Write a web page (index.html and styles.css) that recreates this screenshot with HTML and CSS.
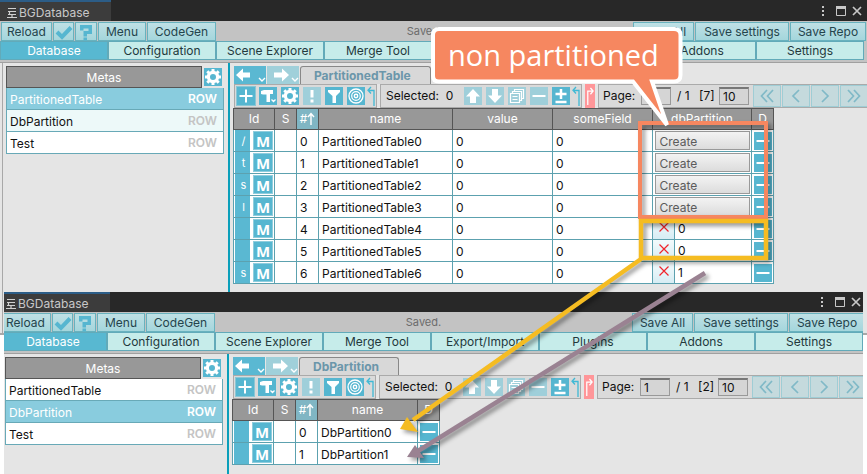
FILE: index.html
```html
<!DOCTYPE html>
<html lang="en">
<head>
<meta charset="utf-8">
<title>BGDatabase</title>
<link rel="stylesheet" href="styles.css">
</head>
<body>
<svg class="defs" aria-hidden="true">
  <symbol id="logo" viewBox="0 0 12 12"><path d="M2 1.500h8M2 4.500h8M2 7.500h8M3.500 4.500v3M1 10.500h10M6 7.500v3" fill="none" stroke="#d0d0d0" stroke-width="1.200"/></symbol>
  <symbol id="dots" viewBox="0 0 12 12"><path d="M5 1h2v2H5zM5 5h2v2H5zM5 9h2v2H5z" fill="#c8c8c8"/></symbol>
  <symbol id="max" viewBox="0 0 12 12"><path d="M1.500 1.500h9v9h-9z" fill="none" stroke="#c8c8c8"/><path d="M1 1h10v3H1z" fill="#c8c8c8"/></symbol>
  <symbol id="close" viewBox="0 0 12 12"><path d="M2 2l8 8M10 2l-8 8" stroke="#c8c8c8" stroke-width="1.700"/></symbol>
  <symbol id="check" viewBox="0 0 18 18"><path d="M2 9l5 5L16 4.500" fill="none" stroke="#56b6d0" stroke-width="4"/></symbol>
  <symbol id="help" viewBox="0 0 18 18"><path d="M3 2h12v9h-5v2.500H6.500V8h5V5.500H6.500V7.500H3zM6.500 14.500H10v3H6.500z" fill="#56b6d0"/></symbol>
  <symbol id="gear" viewBox="0 0 18 18"><circle cx="9" cy="9" r="4.600" fill="none" stroke="#fff" stroke-width="3.200"/><path d="M9 1v2.500M9 14.500V17M1 9h2.500M14.500 9H17M3.300 3.300l1.900 1.900M12.800 12.800l1.900 1.900M14.700 3.300l-1.900 1.900M5.200 12.800l-1.900 1.900" stroke="#fff" stroke-width="3"/></symbol>
  <symbol id="back" viewBox="0 0 32 18"><path d="M2 9l7-6.500v4h7v5H9v4z" fill="#fff"/><path d="M25 12l3 3 3-3" fill="none" stroke="#fff" stroke-width="1.400"/></symbol>
  <symbol id="fwd" viewBox="0 0 32 18"><path d="M22 9l-7-6.500v4H7v5h8v4z" fill="#fff"/><path d="M25 12l3 3 3-3" fill="none" stroke="#fff" stroke-width="1.400"/></symbol>
  <symbol id="plus" viewBox="0 0 18 18"><path d="M9 2.500v13M2.500 9h13" stroke="#fff" stroke-width="2"/></symbol>
  <symbol id="tool" viewBox="0 0 18 18"><path d="M2 4l3-1h9v4h-3v8H7.500V7.500H4L2 7z" fill="#fff"/><path d="M12.500 12.500l2 2 2-2" fill="none" stroke="#fff" stroke-width="1.300"/></symbol>
  <symbol id="bang" viewBox="0 0 18 18"><path d="M7.500 3h3v7.500h-3zM7.500 12.500h3v3h-3z" fill="#fff"/></symbol>
  <symbol id="filter" viewBox="0 0 18 18"><path d="M3 3h12v2l-4 4v7H7.500V9L3 5z" fill="#fff"/></symbol>
  <symbol id="target" viewBox="0 0 18 18"><g fill="none" stroke="#fff"><circle cx="9" cy="9" r="7" stroke-width="1.300"/><circle cx="9" cy="9" r="4.300" stroke-width="1.200"/><circle cx="9" cy="9" r="1.700" stroke-width="1.400"/></g></symbol>
  <symbol id="hook" viewBox="0 0 8 20"><path d="M7 20V4.500H2M4 1L1 4.300 4 7.500" fill="none" stroke="#3fb9d5" stroke-width="1.300"/></symbol>
  <symbol id="hookr" viewBox="0 0 9 20"><path d="M2 20V4.500h5.500M5 1l3 3.500L5 8" fill="none" stroke="#fff" stroke-width="1.400"/></symbol>
  <symbol id="up" viewBox="0 0 18 18"><path d="M9 2l7 7.500h-4V16H6V9.500H2z" fill="#fff"/></symbol>
  <symbol id="down" viewBox="0 0 18 18"><path d="M9 16l7-7.500h-4V2H6v6.500H2z" fill="#fff"/></symbol>
  <symbol id="copy" viewBox="0 0 18 18"><path d="M2.500 6.500h9v9h-9zM4.500 6V4.500h9v9H12M6.500 4V2.500h9v9H14M4.500 9.500h5M4.500 12.500h5" fill="none" stroke="#fff" stroke-width="1.200"/></symbol>
  <symbol id="minus" viewBox="0 0 18 18"><path d="M2.500 9h13" stroke="#fff" stroke-width="2"/></symbol>
  <symbol id="plusminus" viewBox="0 0 18 18"><path d="M9 2v10M3.500 7h11M3.500 15h11" stroke="#fff" stroke-width="2.500"/></symbol>
  <symbol id="first" viewBox="0 0 18 18"><path d="M9 3L3.500 9 9 15M15 3L9.500 9l5.500 6" fill="none" stroke="#80b9c7" stroke-width="1.700"/></symbol>
  <symbol id="prev" viewBox="0 0 18 18"><path d="M12 3L6 9l6 6" fill="none" stroke="#80b9c7" stroke-width="1.700"/></symbol>
  <symbol id="next" viewBox="0 0 18 18"><path d="M6 3l6 6-6 6" fill="none" stroke="#80b9c7" stroke-width="1.700"/></symbol>
  <symbol id="last" viewBox="0 0 18 18"><path d="M3 3l5.500 6L3 15M9 3l5.500 6L9 15" fill="none" stroke="#80b9c7" stroke-width="1.700"/></symbol>
  <symbol id="sort" viewBox="0 0 8 14"><path d="M4 13V2M1 5l3-3.500L7 5" fill="none" stroke="#fff" stroke-width="1.400"/></symbol>
  <symbol id="cross" viewBox="0 0 12 12"><path d="M1.500 1.500l9 9M10.500 1.500l-9 9" stroke="#f0242c" stroke-width="1.200"/></symbol>
</svg>

<div class="desktop">
<section class="window window-a">
  <div class="content">
  <header class="titlebar">
    <div class="title-tab"><svg class="i12"><use href="#logo"/></svg>BGDatabase</div>
    <div class="window-controls"><svg class="i12"><use href="#dots"/></svg><svg class="i12"><use href="#max"/></svg><svg class="i12"><use href="#close"/></svg></div>
  </header>
  <div class="commands">
    <button class="cmd reload">Reload</button><button class="cmd check" aria-label="Check"><svg class="i18"><use href="#check"/></svg></button><button class="cmd help" aria-label="Help"><svg class="i18"><use href="#help"/></svg></button><button class="cmd menu">Menu</button><button class="cmd codegen">CodeGen</button>
    <span class="status">Saved.</span>
    <button class="cmd save-all">Save All</button><button class="cmd save-settings">Save settings</button><button class="cmd save-repo">Save Repo</button>
  </div>
  <nav class="tabs"><button class="active">Database</button><button>Configuration</button><button>Scene Explorer</button><button>Merge Tool</button><button>Export/Import</button><button>Plugins</button><button>Addons</button><button>Settings</button></nav>
  <div class="body">
    <aside class="metas">
      <div class="metas-head"><h2>Metas</h2><button class="tool" aria-label="Metas settings"><svg class="i18"><use href="#gear"/></svg></button></div>
      <ul>
        <li><button class="meta selected">PartitionedTable<b>ROW</b></button></li>
        <li><button class="meta tinted">DbPartition<b>ROW</b></button></li>
        <li><button class="meta">Test<b>ROW</b></button></li>
      </ul>
    </aside>
    <main>
      <div class="crumbs"><button class="nav-btn" aria-label="Back"><svg class="i32"><use href="#back"/></svg></button><button class="nav-btn" aria-label="Forward" disabled><svg class="i32"><use href="#fwd"/></svg></button><span class="crumb">PartitionedTable</span></div>
      <div class="toolbar">
        <div class="group">
          <button class="tool outlined" aria-label="Add"><svg class="i18"><use href="#plus"/></svg></button><button class="tool" aria-label="Tools"><svg class="i18"><use href="#tool"/></svg></button><button class="tool" aria-label="Options"><svg class="i18"><use href="#gear"/></svg></button><button class="tool" aria-label="Errors" disabled><svg class="i18"><use href="#bang"/></svg></button><button class="tool" aria-label="Filter"><svg class="i18"><use href="#filter"/></svg></button><button class="tool" aria-label="Target"><svg class="i18"><use href="#target"/></svg></button><svg class="hook"><use href="#hook"/></svg>
        </div>
        <div class="group">
          <span class="selected-count">Selected:&nbsp; 0</span><button class="tool" aria-label="Move up" disabled><svg class="i18"><use href="#up"/></svg></button><button class="tool" aria-label="Move down" disabled><svg class="i18"><use href="#down"/></svg></button><button class="tool" aria-label="Copy" disabled><svg class="i18"><use href="#copy"/></svg></button><button class="tool" aria-label="Remove" disabled><svg class="i18"><use href="#minus"/></svg></button><button class="tool" aria-label="Toggle selection"><svg class="i18"><use href="#plusminus"/></svg></button><svg class="hook"><use href="#hook"/></svg>
        </div>
        <button class="unfold" aria-label="Unfold"><svg class="hook"><use href="#hookr"/></svg></button>
        <div class="group pager">
          <label for="page-a">Page:</label><input id="page-a" value="1"><span class="pages">/ 1</span><span class="total">[7]</span><input aria-label="Page size" value="10">
          <button class="page-btn" aria-label="First"><svg class="i18"><use href="#first"/></svg></button><button class="page-btn" aria-label="Previous"><svg class="i18"><use href="#prev"/></svg></button><button class="page-btn" aria-label="Next"><svg class="i18"><use href="#next"/></svg></button><button class="page-btn" aria-label="Last"><svg class="i18"><use href="#last"/></svg></button>
        </div>
      </div>
      <table>
        <colgroup><col class="c-id"><col class="c-s"><col class="c-s"><col class="c-name"><col class="c-field"><col class="c-field"><col class="c-part"><col class="c-s"></colgroup>
        <thead><tr><th>Id</th><th>S</th><th class="sorted"><span>#<svg class="sort"><use href="#sort"/></svg></span></th><th>name</th><th>value</th><th>someField</th><th>dbPartition</th><th>D</th></tr></thead>
        <tbody>
          <tr><td class="id"><div><span>/</span><button>M</button></div></td><td></td><td>0</td><td>PartitionedTable0</td><td>0</td><td>0</td><td class="create"><button>Create</button></td><td class="del"><button class="tool" aria-label="Delete"><svg class="i18"><use href="#minus"/></svg></button></td></tr>
          <tr><td class="id"><div><span>t</span><button>M</button></div></td><td></td><td>1</td><td>PartitionedTable1</td><td>0</td><td>0</td><td class="create"><button>Create</button></td><td class="del"><button class="tool" aria-label="Delete"><svg class="i18"><use href="#minus"/></svg></button></td></tr>
          <tr><td class="id"><div><span>s</span><button>M</button></div></td><td></td><td>2</td><td>PartitionedTable2</td><td>0</td><td>0</td><td class="create"><button>Create</button></td><td class="del"><button class="tool" aria-label="Delete"><svg class="i18"><use href="#minus"/></svg></button></td></tr>
          <tr><td class="id"><div><span>l</span><button>M</button></div></td><td></td><td>3</td><td>PartitionedTable3</td><td>0</td><td>0</td><td class="create"><button>Create</button></td><td class="del"><button class="tool" aria-label="Delete"><svg class="i18"><use href="#minus"/></svg></button></td></tr>
          <tr><td class="id"><div><span></span><button>M</button></div></td><td></td><td>4</td><td>PartitionedTable4</td><td>0</td><td>0</td><td class="ref"><div><button aria-label="Clear"><svg class="i12"><use href="#cross"/></svg></button>0</div></td><td class="del"><button class="tool" aria-label="Delete"><svg class="i18"><use href="#minus"/></svg></button></td></tr>
          <tr><td class="id"><div><span></span><button>M</button></div></td><td></td><td>5</td><td>PartitionedTable5</td><td>0</td><td>0</td><td class="ref"><div><button aria-label="Clear"><svg class="i12"><use href="#cross"/></svg></button>0</div></td><td class="del"><button class="tool" aria-label="Delete"><svg class="i18"><use href="#minus"/></svg></button></td></tr>
          <tr><td class="id"><div><span>s</span><button>M</button></div></td><td></td><td>6</td><td>PartitionedTable6</td><td>0</td><td>0</td><td class="ref"><div><button aria-label="Clear"><svg class="i12"><use href="#cross"/></svg></button>1</div></td><td class="del"><button class="tool" aria-label="Delete"><svg class="i18"><use href="#minus"/></svg></button></td></tr>
        </tbody>
      </table>
    </main>
  </div>
  </div>
</section>

<section class="window window-b">
  <div class="content">
  <header class="titlebar">
    <div class="title-tab"><svg class="i12"><use href="#logo"/></svg>BGDatabase</div>
    <div class="window-controls"><svg class="i12"><use href="#dots"/></svg><svg class="i12"><use href="#max"/></svg><svg class="i12"><use href="#close"/></svg></div>
  </header>
  <div class="commands">
    <button class="cmd reload">Reload</button><button class="cmd check" aria-label="Check"><svg class="i18"><use href="#check"/></svg></button><button class="cmd help" aria-label="Help"><svg class="i18"><use href="#help"/></svg></button><button class="cmd menu">Menu</button><button class="cmd codegen">CodeGen</button>
    <span class="status">Saved.</span>
    <button class="cmd save-all">Save All</button><button class="cmd save-settings">Save settings</button><button class="cmd save-repo">Save Repo</button>
  </div>
  <nav class="tabs"><button class="active">Database</button><button>Configuration</button><button>Scene Explorer</button><button>Merge Tool</button><button>Export/Import</button><button>Plugins</button><button>Addons</button><button>Settings</button></nav>
  <div class="body">
    <aside class="metas">
      <div class="metas-head"><h2>Metas</h2><button class="tool" aria-label="Metas settings"><svg class="i18"><use href="#gear"/></svg></button></div>
      <ul>
        <li><button class="meta">PartitionedTable<b>ROW</b></button></li>
        <li><button class="meta selected">DbPartition<b>ROW</b></button></li>
        <li><button class="meta">Test<b>ROW</b></button></li>
      </ul>
    </aside>
    <main>
      <div class="crumbs"><button class="nav-btn" aria-label="Back"><svg class="i32"><use href="#back"/></svg></button><button class="nav-btn" aria-label="Forward" disabled><svg class="i32"><use href="#fwd"/></svg></button><span class="crumb">DbPartition</span></div>
      <div class="toolbar">
        <div class="group">
          <button class="tool outlined" aria-label="Add"><svg class="i18"><use href="#plus"/></svg></button><button class="tool" aria-label="Tools"><svg class="i18"><use href="#tool"/></svg></button><button class="tool" aria-label="Options"><svg class="i18"><use href="#gear"/></svg></button><button class="tool" aria-label="Errors" disabled><svg class="i18"><use href="#bang"/></svg></button><button class="tool" aria-label="Filter"><svg class="i18"><use href="#filter"/></svg></button><button class="tool" aria-label="Target"><svg class="i18"><use href="#target"/></svg></button><svg class="hook"><use href="#hook"/></svg>
        </div>
        <div class="group">
          <span class="selected-count">Selected:&nbsp; 0</span><button class="tool" aria-label="Move up" disabled><svg class="i18"><use href="#up"/></svg></button><button class="tool" aria-label="Move down" disabled><svg class="i18"><use href="#down"/></svg></button><button class="tool" aria-label="Copy" disabled><svg class="i18"><use href="#copy"/></svg></button><button class="tool" aria-label="Remove" disabled><svg class="i18"><use href="#minus"/></svg></button><button class="tool" aria-label="Toggle selection"><svg class="i18"><use href="#plusminus"/></svg></button><svg class="hook"><use href="#hook"/></svg>
        </div>
        <button class="unfold" aria-label="Unfold"><svg class="hook"><use href="#hookr"/></svg></button>
        <div class="group pager">
          <label for="page-b">Page:</label><input id="page-b" value="1"><span class="pages">/ 1</span><span class="total">[2]</span><input aria-label="Page size" value="10">
          <button class="page-btn" aria-label="First"><svg class="i18"><use href="#first"/></svg></button><button class="page-btn" aria-label="Previous"><svg class="i18"><use href="#prev"/></svg></button><button class="page-btn" aria-label="Next"><svg class="i18"><use href="#next"/></svg></button><button class="page-btn" aria-label="Last"><svg class="i18"><use href="#last"/></svg></button>
        </div>
      </div>
      <table>
        <colgroup><col class="c-id"><col class="c-s"><col class="c-s"><col class="c-field"><col class="c-s"></colgroup>
        <thead><tr><th>Id</th><th>S</th><th class="sorted"><span>#<svg class="sort"><use href="#sort"/></svg></span></th><th>name</th><th>D</th></tr></thead>
        <tbody>
          <tr><td class="id"><div><span></span><button>M</button></div></td><td></td><td>0</td><td>DbPartition0</td><td class="del"><button class="tool" aria-label="Delete"><svg class="i18"><use href="#minus"/></svg></button></td></tr>
          <tr><td class="id"><div><span></span><button>M</button></div></td><td></td><td>1</td><td>DbPartition1</td><td class="del"><button class="tool" aria-label="Delete"><svg class="i18"><use href="#minus"/></svg></button></td></tr>
        </tbody>
      </table>
    </main>
  </div>
  </div>
</section>

<svg class="annotations" viewBox="0 0 867 474">
  <g class="shadowed">
    <rect x="640" y="123" width="126" height="94" fill="none" stroke="#f68760" stroke-width="4"/>
  </g>
  <g class="shadowed">
    <path d="M641 221h125v37H641zM641 259L413 420" fill="none" stroke="#f5bc22" stroke-width="4.500"/>
    <path d="M400 429L407 417 418 432z" fill="#f5bc22"/>
  </g>
  <g class="shadowed">
    <path d="M705 273L418 451" fill="none" stroke="#9a8292" stroke-width="4.500"/>
    <path d="M407 457L415 445 424 458z" fill="#9a8292"/>
  </g>
  <path d="M439 29H674Q680.500 29 680.500 35V75Q680.500 81.500 674 81.500H652L667 125 633 81.500H439Q433 81.500 433 76V35Q433 29 439 29z" fill="#f68760" stroke="#fff" stroke-width="4"/>
  <text class="callout" x="448" y="66">non partitioned</text>
</svg>
</div>
</body>
</html>
```
FILE: styles.css
```css
* { box-sizing: border-box; }
body { margin: 0; background: #fff; color: #111; font: 12px/16px Inter, "Liberation Sans", sans-serif; }
button, input { font: inherit; color: inherit; margin: 0; padding: 0; border: 0; border-radius: 0; background: none; }
svg { display: block; flex: none; }
.defs { display: none; }
.i12 { width: 12px; height: 12px; }
.i18 { width: 18px; height: 18px; }
.i32 { width: 32px; height: 18px; }
.desktop { position: relative; overflow: hidden; min-height: 100vh; }

.window { overflow: hidden; background: #e5e5e5; }
.window-a { border-bottom: 2px solid #a8a8a8; }
.window-b { position: relative; margin: -43px 4px 0; min-height: 182px; }
.window-b .content { margin: -1px -3px 0 -5px; }

.titlebar { display: flex; justify-content: space-between; height: 21px; background: #282828; color: #c8c8c8; }
.title-tab { display: flex; align-items: center; gap: 1px; width: 111px; padding: 4px 0 0 6px; background: #3c3c3c; box-shadow: inset 0 2px #2c5d87; }
.window-b .titlebar { border-top: 1px solid #282828; }
.window-controls { display: flex; align-items: center; gap: 4px; padding-right: 4px; }
.window-controls svg:first-child { margin-right: 2px; }

.commands { display: flex; gap: 1px; height: 20px; padding: 1px 1px 0; background: #c3c3c3; }
.cmd { display: flex; align-items: center; justify-content: center; border: 1px solid #68b2be; background: linear-gradient(#bfe0e5, #a4d6dc); color: #24444c; }
.reload { width: 51px; }
.check { width: 21px; }
.help { width: 22px; }
.menu { width: 48px; }
.codegen { width: 69px; }
.save-all { width: 61px; }
.save-settings { width: 94px; }
.save-repo { width: 76px; }
.status { flex: 1; text-align: center; color: #6c6c6c; font-size: 11px; line-height: 18px; }

.tabs { display: flex; height: 22px; padding: 0 3px 2px 0; background: #c3c3c3; border-bottom: 1px solid #a0a0a0; }
.tabs button { flex: 1; border: 1px solid #62aab9; background: #c6ecea; color: #23383c; }
.tabs .active { background: #58b8d1; color: #fff; }

.body { display: flex; min-height: 270px; margin-left: 2px; border-left: 1px solid #a8a8a8; }
.window-b .body { min-height: 120px; }
.metas { flex: none; width: 227px; padding: 3px 4px 0 3px; border-right: 2px solid #0a9fba; }
.metas-head { display: flex; justify-content: space-between; align-items: center; height: 22px; padding-right: 2px; }
h2 { width: 196px; height: 22px; margin: 0; border: 1px solid #555; background: #989898; color: #fff; font-size: 12px; font-weight: 400; line-height: 22px; text-align: center; }
ul { margin: 0; padding: 0; list-style: none; }
.meta { display: flex; justify-content: space-between; align-items: center; width: 100%; height: 22px; padding: 2px 6px 0 3px; border: solid #68a9b7; border-width: 0 1px 1px; background: #fff; }
.meta b { padding-bottom: 2px; color: #c4c4c4; font-weight: 600; }
.meta.tinted { background: #edf9f9; }
.meta.selected, .meta.selected b { background: #89ccde; color: #fff; }

main { flex: 1; min-width: 0; overflow: hidden; padding: 3px 0 0 4px; }
.crumbs { display: flex; gap: 1px; height: 18px; }
.nav-btn { width: 32px; background: #5ab8d2; }
.nav-btn:disabled { background: #a0d0da; }
.crumb { padding: 1px 19px 0 13px; border: 1px solid #888; border-bottom: 0; border-radius: 3px 3px 0 0; background: #d8d8d8; color: #6b96aa; font-weight: 700; }
.toolbar { display: flex; gap: 3px; height: 24px; }
.group { display: flex; flex: none; align-items: center; gap: 4px; padding: 0 1px 0 2px; border: 1px solid #aaa; background: #dadada; }
.group .hook { margin-left: -2px; }
.hook { width: 8px; height: 20px; }
.tool { flex: none; width: 18px; height: 18px; background: #56b6d0; }
.tool:disabled { background: #9fcfda; }
.tool.outlined { outline: 1px solid #8ac7d5; }
.selected-count { width: 77px; padding-left: 3px; }
.unfold { width: 11px; background: #ff9699; padding: 2px 1px; }
.pager { gap: 1px; padding: 0 0 0 4px; }
.pager label { width: 37px; }
.pager input { width: 30px; height: 18px; padding: 0 0 0 3px; border: 1px solid #999; border-top: 2px solid #777; background: #d5d5d5; }
.pages { width: 26px; padding-left: 5px; }
.total { width: 19px; }
.page-btn { display: flex; align-items: center; justify-content: center; width: 28px; height: 22px; border: 1px solid #9fcdd5; background: #c5dadd; }
.pager input + .page-btn { margin-left: 3px; }

table { table-layout: fixed; width: min-content; margin-left: -1px; border-collapse: collapse; }
.c-id { width: 41px; }
.c-s { width: 22px; }
.c-name { width: 134px; }
.c-field { width: 100px; }
.c-part { width: 99px; }
th, td { height: 22px; padding: 0; border: 1px solid #5ca1af; }
th { height: 21px; border-color: #555; background: #989898; color: #fff; font-weight: 400; }
th.sorted { background: #80b6c4; }
th span { display: flex; align-items: center; justify-content: center; }
.sort { width: 8px; height: 14px; }
td { padding: 2px 0 0 3px; background: #fff; line-height: 16px; }
td.id, td.create, td.ref, td.del { padding: 0; }
.id div { display: flex; gap: 3px; height: 21px; padding: 0 1px; }
.id span { width: 15px; padding: 3px 0 0 2px; background: #5ab8d2; color: #fff; font-size: 11px; text-align: center; }
.id button { width: 20px; height: 19px; margin-top: 1px; border: 1px solid #8fcddd; background: #56b6d0; color: #fff; font: 700 15px/14px "Open Sans", sans-serif; }
.create button { display: block; width: 95px; height: 19px; margin: 0 auto; padding: 2px 0 0 4px; border: 1px solid #999; background: linear-gradient(#f3f3f3, #dcdcdc); color: #5b5b5b; line-height: 15px; text-align: left; }
.ref div { display: flex; height: 21px; align-items: center; gap: 3px; }
.ref button { display: flex; justify-content: center; width: 22px; height: 21px; padding-top: 3px; border-right: 1px solid #5ca1af; background: linear-gradient(#f2fafc, #d7edf4); }
.del .tool { display: block; margin: 0 auto; }

.annotations { position: absolute; top: 0; left: 0; width: 867px; height: 474px; pointer-events: none; }
.shadowed { filter: drop-shadow(3px 3px 2px rgba(0, 0, 0, .4)); }
.callout { fill: #fff; font: 500 29px "Open Sans", sans-serif; }
```
